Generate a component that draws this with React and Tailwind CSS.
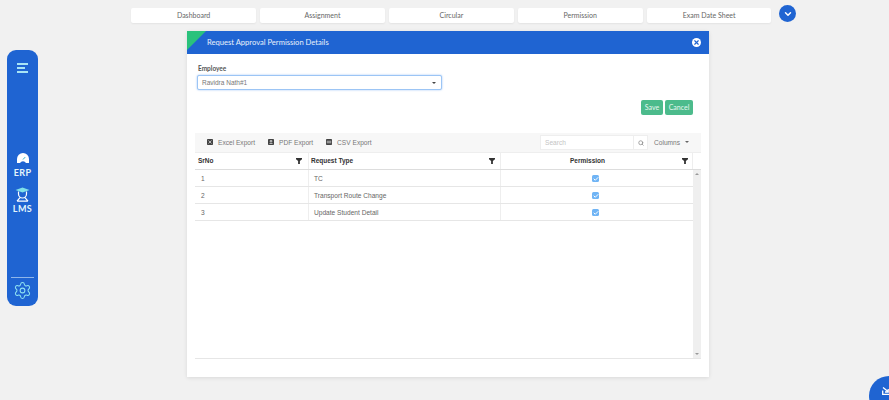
import React from 'react';
import { ChevronDown, Check, Search, Settings, X } from 'lucide-react';

const tabs = ['Dashboard', 'Assignment', 'Circular', 'Permission', 'Exam Date Sheet'];

const rows = [
  { id: 1, type: 'TC' },
  { id: 2, type: 'Transport Route Change' },
  { id: 3, type: 'Update Student Detail' },
];

const exportsList = [
  { label: 'Excel Export', glyph: 'M2 2l2 2-2 2M6 2L4 4l2 2' },
  { label: 'PDF Export', glyph: 'M2 6h4M3 2h2v2H3z' },
  { label: 'CSV Export', glyph: 'M1 3h6M1 5h6' },
];

const FilterIcon = () => (
  <svg width="6" height="6" viewBox="0 0 10 10" className="shrink-0">
    <path d="M0 0h10v2L6.5 5v5h-3V5L0 2z" fill="#333" />
  </svg>
);

const App = () => {
  return (
    <div className="relative w-[889px] h-[400px] overflow-hidden bg-[#f1f1f1] font-['Lato',sans-serif]">
      <div className="flex items-start h-[31px] pl-[131.3px] pt-[5px]">
        <div className="flex gap-[4.3px] mt-[3px]">
          {tabs.map((tab) => (
            <div key={tab} className="w-[124.6px] h-[15px] bg-white rounded-[2px] shadow-[0_1px_2px_rgba(0,0,0,0.06)] flex items-center justify-center text-[7px] text-[#666]">
              {tab}
            </div>
          ))}
        </div>
        <div className="ml-[8px] w-[17px] h-[17px] rounded-full bg-[#1f64d2] flex items-center justify-center">
          <ChevronDown size={10} strokeWidth={3.5} color="#fff" />
        </div>
      </div>

      <div className="flex items-start">
        <div className="ml-[7px] mt-[19px] w-[31px] h-[256px] bg-[#1f64d2] rounded-[9px] flex flex-col items-center">
          <div className="mt-[13px] flex flex-col gap-[2.5px] w-[11px]">
            <div className="h-[1.5px] w-[11px] bg-[#a8e4f5]" />
            <div className="h-[1.5px] w-[8px] bg-[#a8e4f5]" />
            <div className="h-[1.5px] w-[11px] bg-[#a8e4f5]" />
          </div>
          <svg width="12" height="10" viewBox="0 0 12 10" className="mt-[80px]">
            <path d="M0 10V6a6 6 0 0 1 12 0v4H9a3.5 3.5 0 0 0-6 0z" fill="#fff" />
            <path d="M6 6.5l2.2-2.4" stroke="#2fb4c8" strokeWidth="1" />
          </svg>
          <div className="mt-[5px] text-[9px] leading-[10px] font-bold tracking-[0.4px] text-[#e4f5fb]">ERP</div>
          <svg width="15" height="15" viewBox="0 0 15 15" fill="none" className="mt-[9px]">
            <path d="M0.5 3L7.5 0.5L14.5 3L7.5 5.5z" fill="#7fe0e8" />
            <path d="M3.5 4.5v2.5a4 4 0 0 0 8 0V4.5" stroke="#fff" strokeWidth="1.2" />
            <path d="M2 14.2l3-3.5M13 14.2l-3-3.5M2 14.2h11" stroke="#fff" strokeWidth="1.2" />
          </svg>
          <div className="mt-[2px] text-[9px] leading-[10px] font-bold tracking-[0.4px] text-[#e4f5fb]">LMS</div>
          <div className="mt-auto w-[23px] h-px bg-[#8fb6ea]" />
          <Settings size={19} strokeWidth={1.3} color="#8fe3f2" className="mt-[3px] mb-[6px]" />
        </div>

        <div className="ml-[149px] w-[522px] h-[346px] bg-white shadow-[0_1px_4px_rgba(0,0,0,0.1)] flex flex-col">
          <div className="relative h-[23px] shrink-0 bg-[#1f64d2] flex items-center pl-[20px] pr-[8px] justify-between">
            <div className="absolute left-0 top-0 w-0 h-0 border-t-[19px] border-r-[19px] border-t-[#2ac27c] border-r-transparent" />
            <span className="text-[7.6px] text-[#e8f0fb]">Request Approval Permission Details</span>
            <div className="w-[9px] h-[9px] rounded-full bg-white flex items-center justify-center">
              <X size={7} strokeWidth={4} color="#1f64d2" />
            </div>
          </div>

          <div className="pl-[10px] pr-[16px] pt-[10px]">
            <div className="text-[6.5px] leading-[9px] font-bold text-[#555] pl-px">Employee</div>
            <div className="mt-[2px] w-[245px] h-[15px] bg-white rounded-[2px] border border-[#9cc5f5] shadow-[0_0_2px_rgba(80,150,240,0.6)] flex items-center justify-between pl-[4px] pr-[5px] text-[6.5px] text-[#777] font-['Liberation_Sans',sans-serif]">
              <span>Ravidra Nath#1</span>
              <span className="w-0 h-0 border-x-[2px] border-t-[2px] border-x-transparent border-t-[#444]" />
            </div>
            <div className="flex justify-end gap-[2px] mt-[10px]">
              <div className="w-[22px] h-[15px] bg-[#4cbb8c] rounded-[2px] text-[#e8f7f0] text-[7px] flex items-center justify-center">Save</div>
              <div className="w-[28px] h-[15px] bg-[#4cbb8c] rounded-[2px] text-[#e8f7f0] text-[7px] flex items-center justify-center">Cancel</div>
            </div>
          </div>

          <div className="mx-[8px] mt-[18px] w-[506px] font-['Liberation_Sans',sans-serif]">
            <div className="h-[19px] bg-[#f7f7f7] flex items-center pl-[12px] pr-[13px] text-[6.6px] text-[#777]">
              {exportsList.map((item) => (
                <div key={item.label} className="flex items-center mr-[13px]">
                  <svg width="6" height="6" viewBox="0 0 8 8" className="mr-[5px]">
                    <rect width="8" height="8" rx="1" fill="#444" />
                    <path d={item.glyph} stroke="#fff" strokeWidth="0.8" fill="none" />
                  </svg>
                  {item.label}
                </div>
              ))}
              <div className="ml-auto flex items-center h-[15px] bg-white border border-[#eeeeee]">
                <span className="w-[92px] pl-[4px] text-[#c4c4c4]">Search</span>
                <span className="w-[14px] h-full border-l border-[#eeeeee] flex items-center justify-center">
                  <Search size={6} strokeWidth={3} color="#888" />
                </span>
              </div>
              <div className="ml-[6px] flex items-center gap-[5px] w-[34px]">
                Columns
                <span className="w-0 h-0 border-x-[2px] border-t-[2px] border-x-transparent border-t-[#666]" />
              </div>
            </div>

            <div className="flex h-[18px] border-y border-b-[#dddddd] border-t-[#eeeeee] text-[6.5px] font-bold text-[#333]">
              <div className="w-[114px] flex items-center justify-between pl-[3px] pr-[6px] border-r border-[#eeeeee]">
                SrNo <FilterIcon />
              </div>
              <div className="w-[192px] flex items-center justify-between pl-[2px] pr-[5px] border-r border-[#eeeeee]">
                Request Type <FilterIcon />
              </div>
              <div className="relative w-[192px] flex items-center justify-center pr-[18px] border-r border-[#eeeeee]">
                Permission
                <span className="absolute right-[4px] top-[5px]"><FilterIcon /></span>
              </div>
            </div>

            <div className="flex h-[189px] border-b border-[#e6e6e6]">
              <div className="w-[498px] text-[6.6px] text-[#666]">
                {rows.map((row) => (
                  <div key={row.id} className="flex h-[17px] border-b border-[#e6e6e6]">
                    <div className="w-[114px] flex items-center pl-[6px] pt-px border-r border-[#eeeeee]">{row.id}</div>
                    <div className="w-[192px] flex items-center pl-[5px] pt-px border-r border-[#eeeeee]">{row.type}</div>
                    <div className="w-[192px] flex items-center justify-center pt-px pr-[3px]">
                      <span className="w-[7px] h-[7px] rounded-[1.5px] bg-[#6fb4f5] flex items-center justify-center">
                        <Check size={6} strokeWidth={4} color="#fff" />
                      </span>
                    </div>
                  </div>
                ))}
              </div>
              <div className="w-[8px] bg-[#efefef] flex flex-col items-center justify-between py-[3px]">
                <span className="w-0 h-0 border-x-[2px] border-b-[2px] border-x-transparent border-b-[#999]" />
                <span className="w-0 h-0 border-x-[2px] border-t-[2px] border-x-transparent border-t-[#999]" />
              </div>
            </div>
          </div>
        </div>
      </div>

      <div className="absolute left-[869px] top-[376px] w-[40px] h-[40px] rounded-full bg-[#1f64d2] flex items-start pl-[13px] pt-[11px]">
        <svg width="8" height="8" viewBox="0 0 8 8" fill="none" stroke="#fff" strokeWidth="1.3">
          <path d="M1 0.5l5 4M3 5h3.2V2M0.7 3.5v4h7" />
        </svg>
      </div>
    </div>
  );
};

export default App;
